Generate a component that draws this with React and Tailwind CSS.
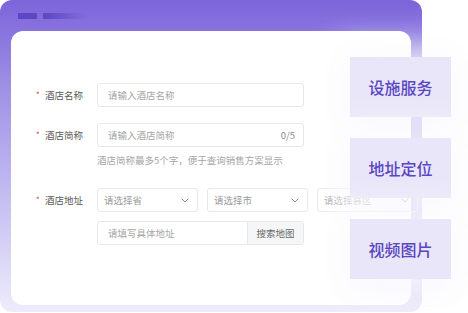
import React from "react";

const font = { fontFamily: '"Noto Sans CJK SC", "Noto Sans", sans-serif' };

const Chevron = () => (
  <svg width="8" height="5" viewBox="0 0 8 5" fill="none">
    <path d="M1 1l3 3 3-3" stroke="#8c8c8c" strokeWidth="1" strokeLinecap="round" strokeLinejoin="round" />
  </svg>
);

const Label = ({ children }) => (
  <div className="flex items-center h-[24px] w-[61px] shrink-0">
    <span className="text-[#f5222d] text-[8px] w-[9px] leading-none">*</span>
    <span className="text-[9.5px] text-[#595959]">{children}</span>
  </div>
);

const Select = ({ text }) => (
  <div className="flex items-center justify-between h-[24px] w-[101px] border border-[#e8e8e8] rounded-[3px] pl-[6px] pr-[8px] shrink-0">
    <span className="text-[9.5px] text-[#9a9a9a]">{text}</span>
    <Chevron />
  </div>
);

const sideCards = ["设施服务", "地址定位", "视频图片"];

export default function App() {
  return (
    <div className="relative w-[468px] h-[313px] bg-white overflow-hidden" style={font}>
      {/* purple frame */}
      <div className="w-[422px] h-[312px] rounded-[12px] bg-gradient-to-b from-[#7c64da] via-[#a193e6] via-30% to-[#eeecfb] pt-[13px] px-[11px]">
        <div className="flex items-center gap-[6px] pl-[7px] h-[6px]">
          <div className="w-[19px] h-[6px] bg-[#5d47c2]" />
          <div className="w-[44px] h-[6px] bg-gradient-to-r from-[#5d47c2] to-transparent" />
        </div>

        {/* white card */}
        <div className="mt-[12px] h-[274px] bg-white rounded-[12px] pt-[52px] pl-[25px]">
          <div className="flex items-center">
            <Label>酒店名称</Label>
            <div className="flex items-center h-[24px] w-[207px] border border-[#e8e8e8] rounded-[3px] pl-[10px]">
              <span className="text-[9.5px] text-[#a6a6a6]">请输入酒店名称</span>
            </div>
          </div>

          <div className="flex items-center mt-[16px]">
            <Label>酒店简称</Label>
            <div className="flex items-center justify-between h-[24px] w-[207px] border border-[#e8e8e8] rounded-[3px] pl-[10px] pr-[8px]">
              <span className="text-[9.5px] text-[#a6a6a6]">请输入酒店简称</span>
              <span className="text-[9.5px] text-[#8c8c8c]">0/5</span>
            </div>
          </div>
          <div className="ml-[61px] mt-[7px] text-[9.5px] leading-[12px] text-[#a6a6a6]">
            酒店简称最多5个字，便于查询销售方案显示
          </div>

          <div className="flex items-center mt-[22px]">
            <Label>酒店地址</Label>
            <div className="flex gap-[9px]">
              <Select text="请选择省" />
              <Select text="请选择市" />
              <Select text="请选择县区" />
            </div>
          </div>

          <div className="flex items-center mt-[9px] ml-[61px]">
            <div className="flex h-[24px] w-[207px] border border-[#e8e8e8] rounded-[3px] overflow-hidden">
              <div className="flex-1 flex items-center pl-[10px]">
                <span className="text-[9.5px] text-[#a6a6a6]">请填写具体地址</span>
              </div>
              <div className="w-[56px] flex items-center justify-center bg-[#f5f6f8] border-l border-[#e8e8e8]">
                <span className="text-[9.5px] text-[#666]">搜索地图</span>
              </div>
            </div>
          </div>
        </div>
      </div>

      {/* floating feature cards */}
      <div className="absolute left-[350px] top-[57px] flex flex-col gap-[21px]">
        {sideCards.map((t) => (
          <div
            key={t}
            className="w-[101px] h-[60px] flex items-center justify-center bg-[#e8e6f8] shadow-[0_0_30px_14px_rgba(255,255,255,0.75),0_6px_30px_rgba(100,80,200,0.12)]"
          >
            <span className="text-[16px] font-medium text-[#5a45c2]">{t}</span>
          </div>
        ))}
      </div>
    </div>
  );
}
